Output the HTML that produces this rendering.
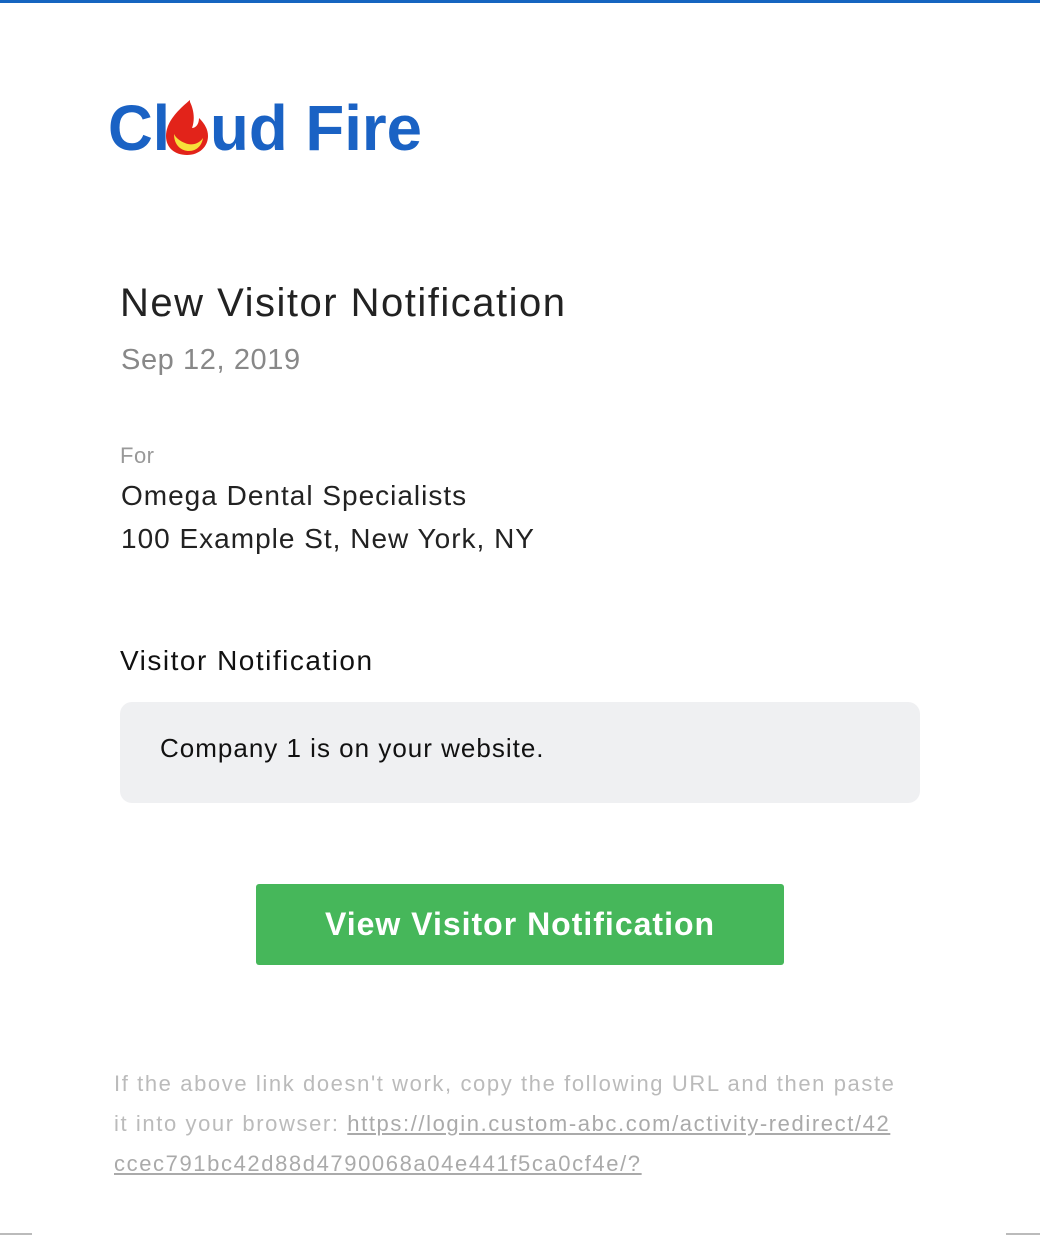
<!DOCTYPE html>
<html><head><meta charset="utf-8"><style>
body{margin:0;width:1040px;height:1235px;background:#fff;position:relative;overflow:hidden;font-family:"Liberation Sans",Arial,sans-serif;}
.a{position:absolute;white-space:nowrap;}
</style></head><body>
<div class="a" style="left:0;top:0;width:1040px;height:3px;background:#1565c0"></div>
<svg class="a" style="left:100px;top:90px" width="340" height="75" viewBox="0 0 340 75">
<text x="8" y="60" font-family="Liberation Sans" font-weight="bold" font-size="64" fill="#1a62c4" textLength="62" lengthAdjust="spacingAndGlyphs">Cl</text>
<path d="M90 10 C78 20 66 32 66 46 C66 58 75 65 87 65 C99 65 108 57 108 46 C108 38 103 32 99 28 C99 34 96 38 92 38 C95 30 94 20 90 12Z" fill="#e2231a"/>
<path d="M74 44 C74 56 82 61 89 61 C97 61 102 55 103 48 C99 54 91 56 85 53 C80 51 76 48 74 44Z" fill="#f7e03a"/>
<text x="110" y="60" font-family="Liberation Sans" font-weight="bold" font-size="64" fill="#1a62c4" textLength="212" lengthAdjust="spacingAndGlyphs">ud Fire</text>
</svg>
<div class="a" style="left:120px;top:281px;font-size:40px;color:#222;letter-spacing:1.5px">New Visitor Notification</div>
<div class="a" style="left:121px;top:344px;font-size:29px;color:#888;letter-spacing:0.6px">Sep 12, 2019</div>
<div class="a" style="left:120px;top:443px;font-size:22px;color:#999;letter-spacing:0.5px">For</div>
<div class="a" style="left:121px;top:474px;font-size:28px;color:#222;line-height:43px;letter-spacing:1px">Omega Dental Specialists<br>100 Example St, New York, NY</div>
<div class="a" style="left:120px;top:645px;font-size:28px;color:#111;letter-spacing:1.5px">Visitor Notification</div>
<div class="a" style="left:120px;top:702px;width:800px;height:101px;background:#eff0f2;border-radius:12px"></div>
<div class="a" style="left:160px;top:733px;font-size:26px;color:#111;letter-spacing:1px">Company 1 is on your website.</div>
<div class="a" style="left:256px;top:884px;width:528px;height:81px;background:#46b75a;border-radius:3px;color:#fff;font-weight:bold;font-size:32px;line-height:81px;text-align:center;letter-spacing:1px">View Visitor Notification</div>
<div class="a" style="left:114px;top:1064px;font-size:22px;color:#bbb;line-height:40px;letter-spacing:1.6px">If the above link doesn't work, copy the following URL and then paste<br>it into your browser: <span style="text-decoration:underline;color:#aaa">https://login.custom-abc.com/activity-redirect/42</span><br><span style="text-decoration:underline;color:#aaa">ccec791bc42d88d4790068a04e441f5ca0cf4e/?</span></div>
<div class="a" style="left:0;top:1233px;width:32px;height:2px;background:#bbb"></div>
<div class="a" style="left:1006px;top:1233px;width:34px;height:2px;background:#bbb"></div>
</body></html>
